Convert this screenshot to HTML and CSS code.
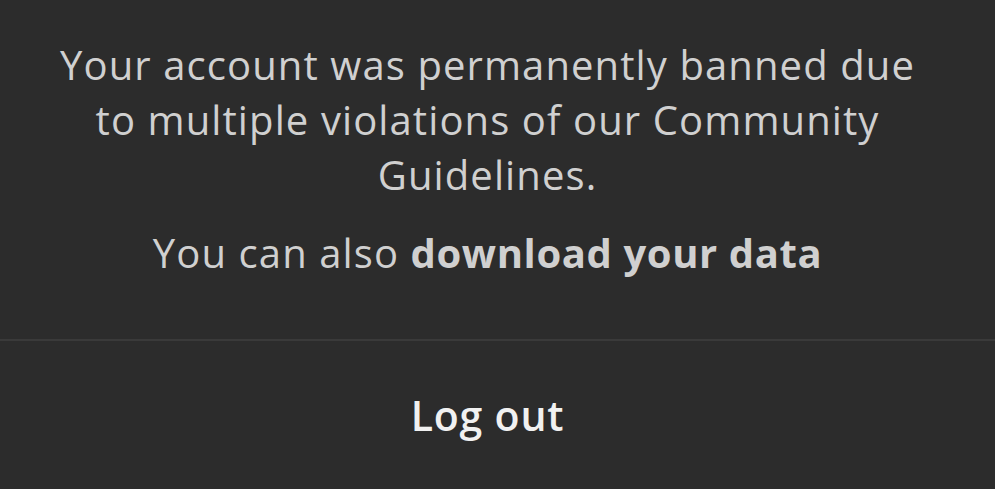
FILE: index.html
```html
<!DOCTYPE html>
<html lang="en">
<head>
    <meta charset="UTF-8">
    <title>Account banned</title>
    <link rel="stylesheet" href="styles.css">
</head>
<body>
    <div class="sheet">
        <div class="message">
            <p class="reason">Your account was permanently banned due to multiple violations of our Community Guidelines.</p>
            <p class="download">You can also <b>download your data</b></p>
        </div>
        <div class="actions">
            <a class="logout">Log out</a>
        </div>
    </div>
</body>
</html>
```

FILE: styles.css
```css
/* reset */
html, body, p {
    margin: 0;
    padding: 0;
}
body {
    background: #2c2c2c;
    font-family: "Open Sans", "Noto Sans", sans-serif;
    font-variant-ligatures: none;
    height: 489px;
    overflow: hidden;
}
/* sheet */
.sheet {
    display: flex;
    flex-direction: column;
    height: 489px;
}
.message {
    padding: 37px 72px 0 52px;
    height: 302px;
    border-bottom: 2px solid #3a3a3a;
    text-align: center;
    color: #d0d0d0;
}
.reason {
    font-size: 40px;
    line-height: 55px;
    letter-spacing: 1.1px;
}
.download {
    margin-top: 23px;
    font-size: 40px;
    line-height: 55px;
    letter-spacing: 1.1px;
}
.download b {
    font-weight: 700;
    letter-spacing: 0.6px;
}
.actions {
    flex: 1;
    display: flex;
    align-items: center;
    justify-content: center;
    padding-right: 20px;
}
.logout {
    font-size: 41px;
    font-weight: 600;
    letter-spacing: 0.8px;
    color: #f1f1f1;
    cursor: pointer;
}
```
